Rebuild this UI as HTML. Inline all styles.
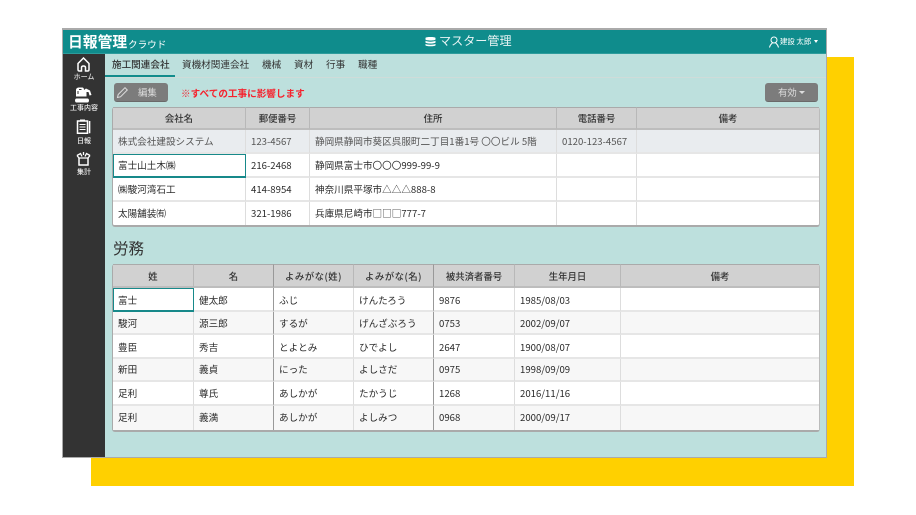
<!DOCTYPE html>
<html lang="ja"><head><meta charset="utf-8"><title>マスター管理</title>
<style>
*{box-sizing:border-box}
html,body{margin:0;padding:0;background:#fff}
body{width:916px;height:515px;position:relative;overflow:hidden;font-family:"Noto Sans CJK JP","Liberation Sans",sans-serif;color:#333}
.a{position:absolute;white-space:nowrap}
#y{left:91px;top:57px;width:763px;height:429px;background:#ffd000}
#app{left:62px;top:28px;width:765px;height:430px;background:#bde0dd;border:1px solid #aaa;border-top:2px solid #aaa}
#hd{left:63px;top:30px;width:763px;height:24px;background:#0f8c8c;border-bottom:1px solid #2d9c9c}
#sb{left:63px;top:54px;width:42px;height:403px;background:#333}
.sl{color:#eee;font-size:7px;width:42px;text-align:center;left:63px;line-height:8px}
.tab{top:58px;font-size:9.6px;line-height:13px;color:#333}
table{position:absolute;border-collapse:separate;border-spacing:0;table-layout:fixed;background:#fff;font-size:9.6px;line-height:13px;color:#2b2b2b;border-radius:3px;border-bottom:2px solid #aaa;border-right:1px solid #bbb;border-left:1px solid #aaa}
th{background:#d1d1d1;font-weight:500;font-size:9.4px;text-align:center;border-right:1px solid #b8b8b8;border-top:1px solid #aaa;border-bottom:2px solid #bdbdbd;padding:0;color:#333}
td{border-right:1px solid #ddd;border-bottom:2px solid #e6e6e6;padding:0 0 0 5px;white-space:nowrap;overflow:hidden;vertical-align:middle}
th:last-child,td:last-child{border-right:0}
tr:last-child td{border-bottom:0}
.g td{background:#e9ecef;color:#555}
.f{background:#f7f7f7}
td.sel{border:1px solid #17898a;border-bottom:2px solid #17898a;padding-left:4px}
th.dk,td.dk{border-right-color:#999}
tr.d td,tr.d th{padding-top:2px}
tr.u td{padding-bottom:2px}
th.w{letter-spacing:.5px}
</style></head><body>
<div id="y" class="a"></div>
<div id="app" class="a"></div>
<div id="hd" class="a"></div>
<div class="a" style="left:68px;top:32px;font-size:14.800px;line-height:20px;font-weight:bold;color:#fff">日報管理</div>
<div class="a" style="left:128px;top:38px;font-size:9.600px;line-height:13px;color:#fff">クラウド</div>
<svg class="a" style="left:425px;top:36px" width="11" height="11" viewBox="0 0 11 11"><path d="M0.5 2C0.5 .7 10.5 .7 10.5 2V3.5C10.5 4.8 .5 4.8 .5 3.5ZM.5 4.8C2 6 9 6 10.500 4.800V6.600C9 7.800 2 7.800 .5 6.600ZM.5 7.900C2 9 9 9 10.500 7.900V9.200C10.500 10.600 .5 10.600 .5 9.200Z" fill="#fff"/></svg>
<div class="a" style="left:439px;top:33px;font-size:12.100px;line-height:16px;color:#e8f4f4">マスター管理</div>
<svg class="a" style="left:769px;top:36px" width="10" height="12" viewBox="0 0 10 12"><circle cx="5" cy="4" r="3" fill="none" stroke="#fff"/><path d="M.5 11.500C1 8.500 3 7.500 3.500 6.800M9.500 11.500C9 8.500 7 7.500 6.500 6.800" fill="none" stroke="#fff"/></svg>
<div class="a" style="left:780px;top:36px;font-size:7.400px;line-height:11px;color:#fff">建設 太郎</div>
<div class="a" style="left:814px;top:40px;border:2.500px solid transparent;border-top:3px solid #fff;border-bottom:0"></div>

<div id="sb" class="a"></div>
<svg class="a" style="left:77px;top:57px" width="13" height="15" viewBox="0 0 13 15"><path d="M1 6.500L6.500 1L12 6.500V12.500C12 13.500 11.500 14 10.500 14H8.500V10.500C8.500 8.500 4.500 8.500 4.500 10.500V14H2.500C1.500 14 1 13.500 1 12.500Z" fill="none" stroke="#fff" stroke-width="1.500"/></svg>
<div class="a sl" style="top:73px;color:#ddd;font-weight:500">ホーム</div>
<svg class="a" style="left:74px;top:87px" width="19" height="16" viewBox="0 0 19 16"><path d="M2 3C2 1 4 .5 5 .5H8C9.500 .5 10 1.500 10 3L12 1.500L16 3.500L17.500 8L15.500 8.500L14.500 5L12.500 5V9.500H2Z" fill="#fff"/><path d="M2.500 11.500H13.500C15.500 11.500 15.500 15.500 13.500 15.500H2.500C.5 15.500 .5 11.500 2.500 11.500Z" fill="#fff"/><path d="M4 4V7M5 2.500H7.500" stroke="#333"/></svg>
<div class="a sl" style="top:104px;font-weight:500">工事内容</div>
<svg class="a" style="left:76px;top:119px" width="15" height="15" viewBox="0 0 15 15"><path d="M1.500 2H11.500V14.200H1.500ZM13.600 2V14.200" fill="none" stroke="#fff" stroke-width="1.500"/><path d="M3.500 5.500H9.500M3.500 8H9.500M3.500 10.500H9.500M4 1H9" stroke="#fff"/></svg>
<div class="a sl" style="top:137px;font-weight:500">日報</div>
<svg class="a" style="left:76px;top:151px" width="15" height="15" viewBox="0 0 15 15"><path d="M3 7V14H12V7" fill="none" stroke="#fff" stroke-width="1.500"/><path d="M1 4.500L4.500 2.500L6 5.500M14 4.500L10.500 2.500L9 5.500M7.500 1V4M1 4.500L3 7H12L14 4.500" fill="none" stroke="#fff" stroke-width="1.300"/></svg>
<div class="a sl" style="top:168px;font-weight:500">集計</div>

<div class="a" style="left:105px;top:77px;width:721px;height:1px;background:#cfdcd9"></div>
<div class="a" style="left:105px;top:75px;width:70px;height:2px;background:#128c8c"></div>
<div class="a tab" style="left:112px;font-weight:500">施工関連会社</div>
<div class="a tab" style="left:182px">資機材関連会社</div>
<div class="a tab" style="left:262px">機械</div>
<div class="a tab" style="left:294px">資材</div>
<div class="a tab" style="left:326px">行事</div>
<div class="a tab" style="left:358px">職種</div>

<div class="a" style="left:114px;top:83px;width:54px;height:19px;background:#7c7c7c;border-radius:3px;border-bottom:1px solid #6a6a6a"></div>
<svg class="a" style="left:116px;top:86px" width="13" height="13" viewBox="0 0 13 13"><path d="M1.500 11.500L2.200 8.500L9 1.700L11.300 4L4.500 10.800Z" fill="none" stroke="#ddd"/></svg>
<div class="a" style="left:138px;top:86px;font-size:9.400px;line-height:13px;color:#ddd">編集</div>
<div class="a" style="left:181px;top:87px;font-size:9.600px;line-height:13px;font-weight:bold;color:#f5222d">※すべての工事に影響します</div>
<div class="a" style="left:765px;top:83px;width:53px;height:19px;background:#7c7c7c;border-radius:3px;border-bottom:1px solid #6a6a6a"></div>
<div class="a" style="left:778px;top:86px;font-size:9.400px;line-height:13px;color:#ddd">有効</div>
<div class="a" style="left:799px;top:91px;border:3px solid transparent;border-top:3px solid #ddd;border-bottom:0"></div>

<table style="left:112px;top:107px;width:708px;height:119px">
<colgroup><col style="width:133px"><col style="width:64px"><col style="width:247px"><col style="width:80px"><col></colgroup>
<tr style="height:23px"><th>会社名</th><th>郵便番号</th><th>住所</th><th>電話番号</th><th>備考</th></tr>
<tr class="g" style="height:24px"><td>株式会社建設システム</td><td>123-4567</td><td>静岡県静岡市葵区呉服町二丁目1番1号 〇〇ビル 5階</td><td>0120-123-4567</td><td></td></tr>
<tr style="height:24px"><td class="sel">富士山土木㈱</td><td>216-2468</td><td>静岡県富士市〇〇〇999-99-9</td><td></td><td></td></tr>
<tr style="height:24px"><td>㈱駿河湾石工</td><td>414-8954</td><td>神奈川県平塚市△△△888-8</td><td></td><td></td></tr>
<tr style="height:23px"><td>太陽舗装㈲</td><td>321-1986</td><td>兵庫県尼崎市□□□777-7</td><td></td><td></td></tr>
</table>

<div class="a" style="left:113px;top:238px;font-size:15.500px;line-height:21px;color:#333">労務</div>

<table style="left:112px;top:264px;width:708px;height:167px">
<colgroup><col style="width:81px"><col style="width:80px"><col style="width:80px"><col style="width:80px"><col style="width:81px"><col style="width:106px"><col></colgroup>
<tr class="d" style="height:24px"><th>姓</th><th class="dk">名</th><th class="w">よみがな(姓)</th><th class="dk w">よみがな(名)</th><th>被共済者番号</th><th>生年月日</th><th>備考</th></tr>
<tr class="d" style="height:24px"><td class="sel">富士</td><td class="dk">健太郎</td><td>ふじ</td><td class="dk">けんたろう</td><td>9876</td><td>1985/08/03</td><td></td></tr>
<tr class="d" style="height:23px"><td class="f">駿河</td><td class="f dk">源三郎</td><td class="f">するが</td><td class="f dk">げんざぶろう</td><td class="f">0753</td><td class="f">2002/09/07</td><td class="f"></td></tr>
<tr class="d" style="height:24px"><td>豊臣</td><td class="dk">秀吉</td><td>とよとみ</td><td class="dk">ひでよし</td><td>2647</td><td>1900/08/07</td><td></td></tr>
<tr style="height:23px"><td class="f">新田</td><td class="f dk">義貞</td><td class="f">にった</td><td class="f dk">よしさだ</td><td class="f">0975</td><td class="f">1998/09/09</td><td class="f"></td></tr>
<tr style="height:24px"><td>足利</td><td class="dk">尊氏</td><td>あしかが</td><td class="dk">たかうじ</td><td>1268</td><td>2016/11/16</td><td></td></tr>
<tr class="u" style="height:24px"><td class="f">足利</td><td class="f dk">義満</td><td class="f">あしかが</td><td class="f dk">よしみつ</td><td class="f">0968</td><td class="f">2000/09/17</td><td class="f"></td></tr>
</table>
</body></html>
